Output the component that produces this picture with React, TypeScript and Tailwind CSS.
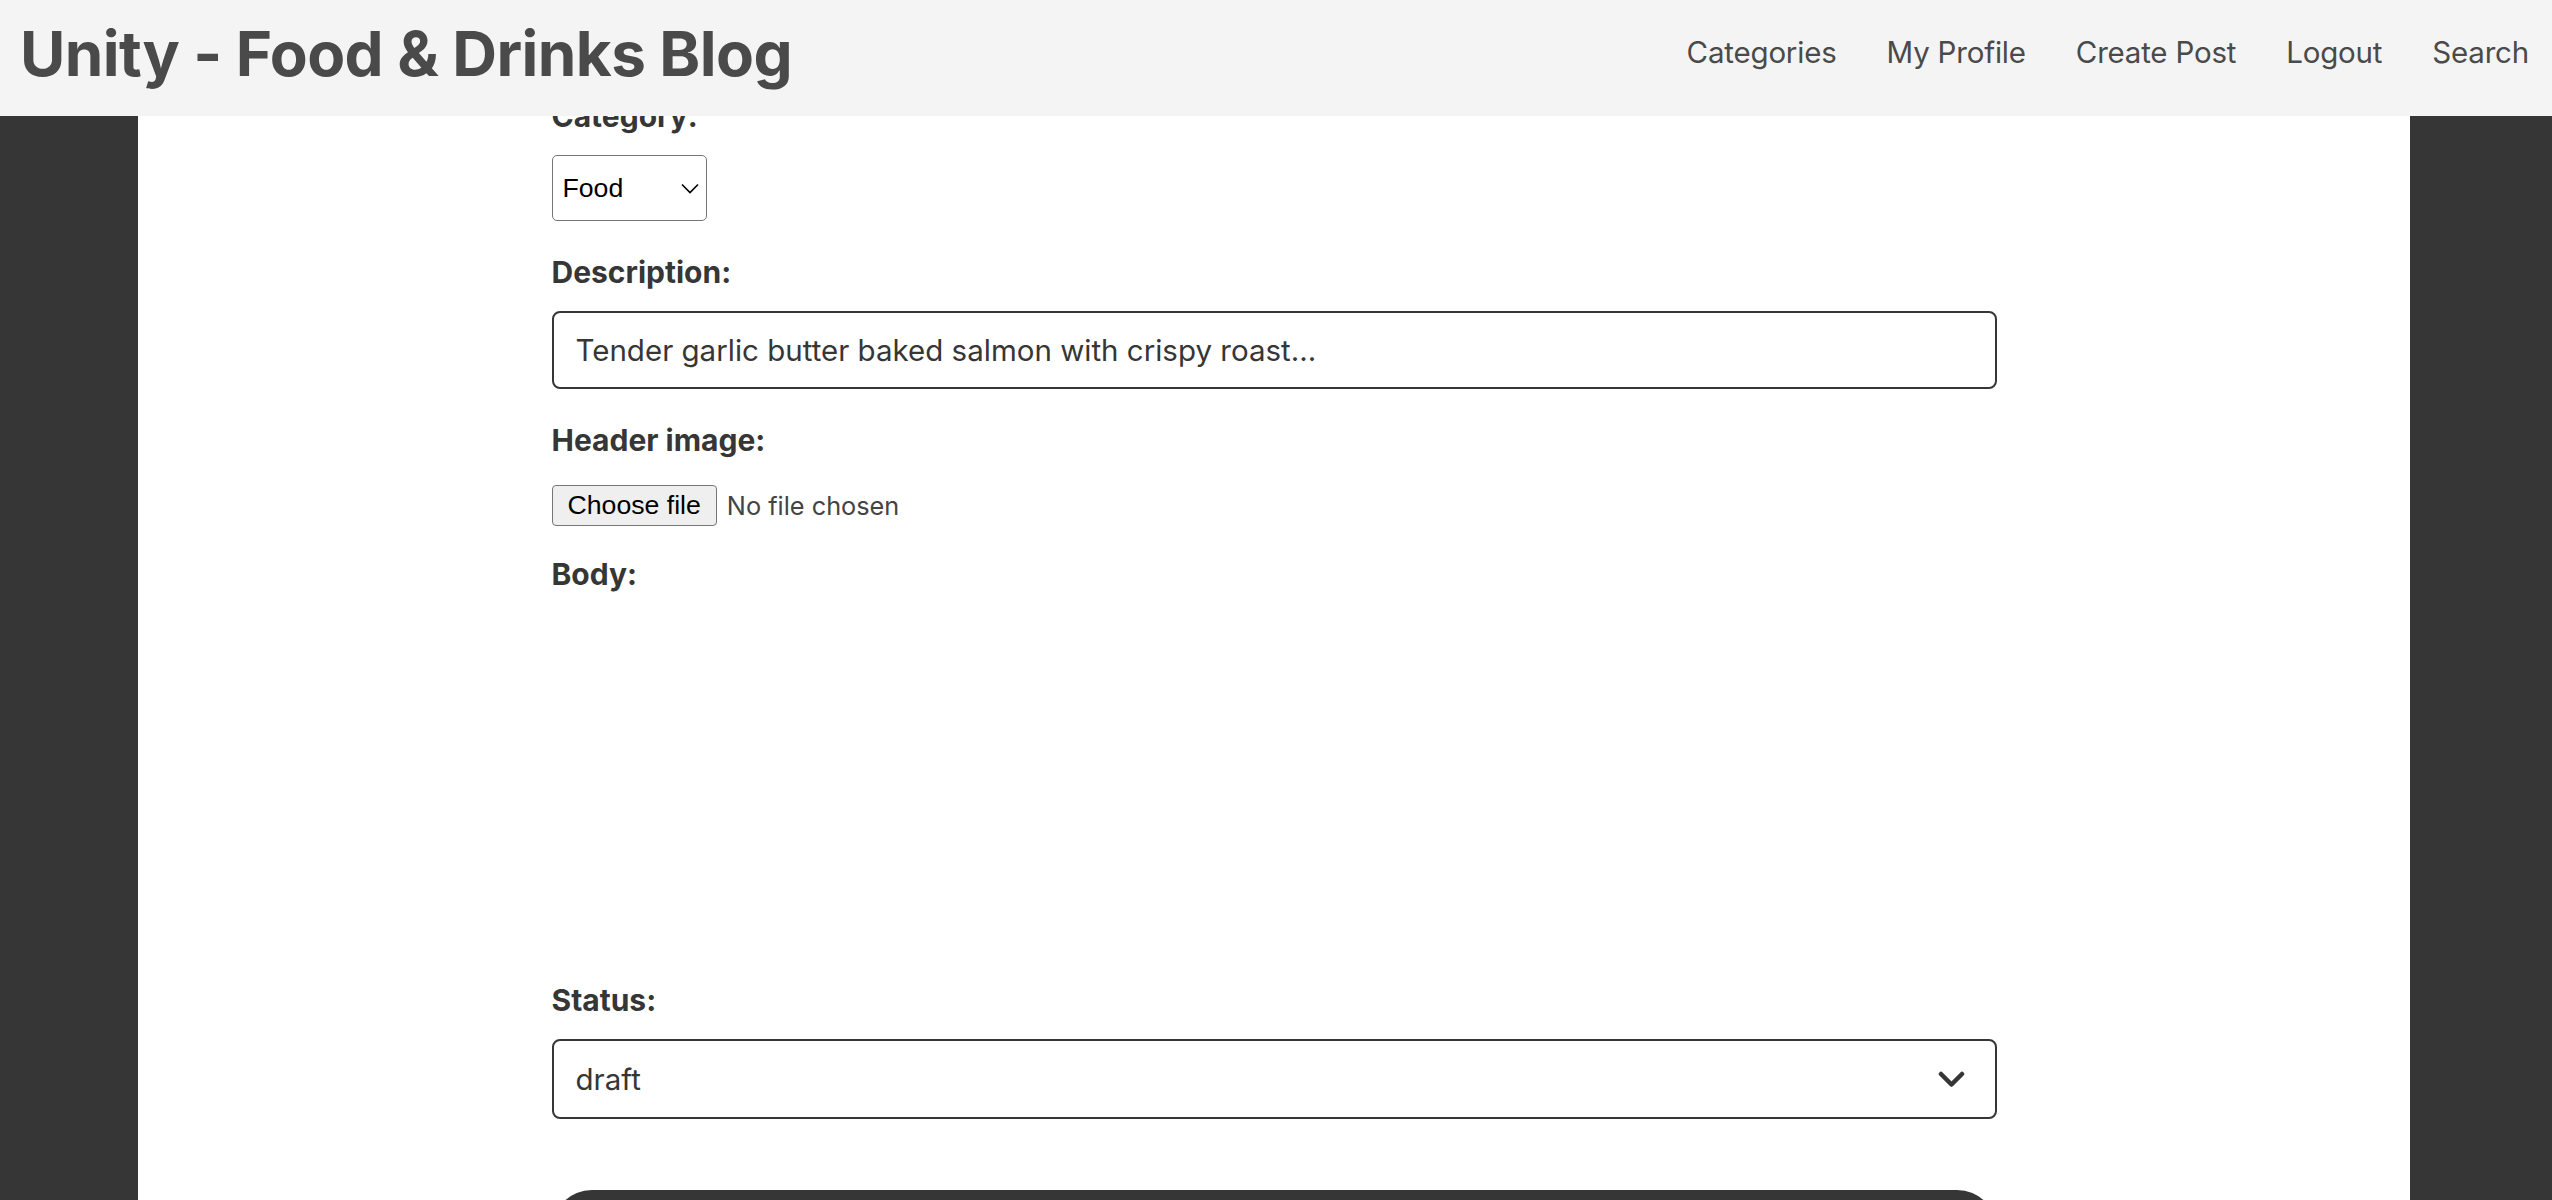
import React from 'react'

const navItems = ['Categories', 'My Profile', 'Create Post', 'Logout', 'Search']

const Label = ({ children, className = '' }: { children: React.ReactNode; className?: string }) => {
  return (
    <label className={`block text-[30px] leading-[36px] font-bold text-[#363636] ${className}`}>
      {children}
    </label>
  )
}

const Navbar = () => {
  return (
    <header className="fixed top-0 inset-x-0 z-10 h-[116px] bg-[#f4f4f4] flex items-start justify-between pl-[20px] pr-[23px]">
      <h1 className="pt-[23px] text-[62px] leading-none font-bold text-[#4a4a4a] tracking-[-0.6px]">
        Unity - Food &amp; Drinks Blog
      </h1>
      <nav className="pt-[38px] flex items-start gap-[50px]">
        {navItems.map((item, index) => (
          <a key={index} href="#" className="text-[29.5px] tracking-[-0.2px] text-[#4a4a4a] leading-none">
            {item}
          </a>
        ))}
      </nav>
    </header>
  )
}

export default function App() {
  return (
    <div className="h-[1200px] overflow-hidden bg-[#363636] font-[Inter,sans-serif]">
      <Navbar />
      <main className="ml-[138px] w-[2272px] h-full bg-white flex justify-center">
        <form className="w-[1445px] pt-[98px]" onSubmit={(e) => e.preventDefault()}>
          <Label>Category:</Label>
          <div className="relative mt-[21px] w-[155px] h-[66px]">
            <select className="appearance-none w-full h-full border border-[#767676] rounded-[5px] bg-white pl-[10px] text-[26.67px] text-black font-['Liberation_Sans',Arial,sans-serif] outline-none">
              <option>Food</option>
              <option>Drinks</option>
            </select>
            <svg className="absolute right-[8px] top-[28px] pointer-events-none" width="18" height="11" viewBox="0 0 18 11" fill="none">
              <path d="M1 1.5l8 8 8-8" stroke="#000" strokeWidth="1.6" />
            </svg>
          </div>

          <Label className="mt-[33px]">Description:</Label>
          <input
            type="text"
            defaultValue="Tender garlic butter baked salmon with crispy roast..."
            className="mt-[21px] block w-full h-[78px] border-2 border-[#363636] rounded-[8px] px-[22px] text-[29.5px] text-[#363636] outline-none"
          />

          <Label className="mt-[33px]">Header image:</Label>
          <div className="mt-[27px] flex items-center gap-[10px]">
            <button type="button" className="h-[41px] px-[15px] bg-[#efefef] border border-[#767676] rounded-[4px] text-[26.67px] leading-none text-black font-['Liberation_Sans',Arial,sans-serif]">
              Choose file
            </button>
            <span className="text-[25.3px] text-[#444]">No file chosen</span>
          </div>

          <Label className="mt-[30px]">Body:</Label>
          <div className="h-[357px]" />

          <Label className="mt-[33px]">Status:</Label>
          <div className="relative mt-[21px] h-[80px]">
            <select className="appearance-none w-full h-full border-2 border-[#363636] rounded-[8px] bg-white px-[22px] text-[29.5px] text-[#363636] outline-none">
              <option>draft</option>
              <option>published</option>
            </select>
            <svg className="absolute right-[32px] top-[32px] pointer-events-none" width="27" height="18" viewBox="0 0 27 18" fill="none">
              <path d="M3 3l10.5 10.5L24 3" stroke="#363636" strokeWidth="4.5" strokeLinecap="round" strokeLinejoin="round" />
            </svg>
          </div>

          <button type="submit" className="mt-[71px] w-full h-[80px] rounded-full bg-[#363636] text-white text-[30px] font-bold">
            Submit
          </button>
        </form>
      </main>
    </div>
  )
}
